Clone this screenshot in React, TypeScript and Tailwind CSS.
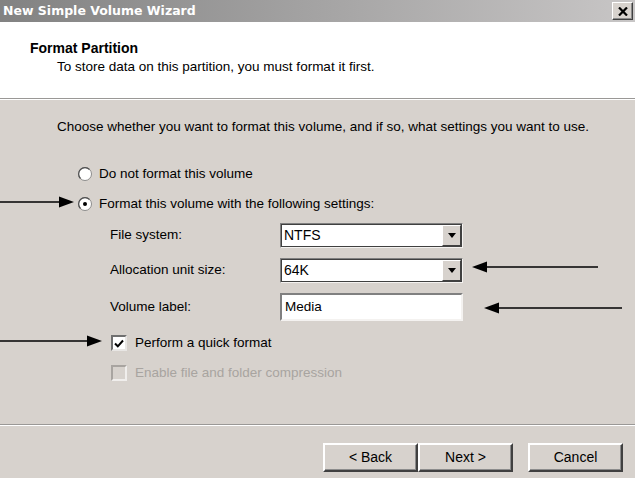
import React from 'react';

const font = { fontFamily: '"Liberation Sans", Arial, sans-serif' };

function Combo({ value }: { value: string }) {
    return (
        <div className="w-[183px] h-[25px] flex bg-white border-2 border-t-[#808080] border-l-[#808080] border-b-[#f4f2f0] border-r-[#f4f2f0] outline outline-1 outline-[#404040] -outline-offset-2">
            <div className="flex-1 flex items-center pl-[2px] text-[14px] text-black">{value}</div>
            <div className="w-[19px] h-full bg-[#d7d2cd] border border-t-white border-l-white border-b-[#404040] border-r-[#404040] flex items-center justify-center">
                <svg width="8" height="5" viewBox="0 0 8 5"><path d="M0 0H8L4 5Z" fill="#000" /></svg>
            </div>
        </div>
    );
}

function Radio({ checked }: { checked?: boolean }) {
    return (
        <svg width="14" height="14" viewBox="0 0 14 14">
            <circle cx="7" cy="7" r="6.5" fill="#fff" stroke="#8c8c8c" />
            <path d="M2.5 11.5A6 6 0 0 1 11.5 2.5" stroke="#505050" strokeWidth="1.2" fill="none" />
            {checked && <circle cx="7" cy="7" r="2" fill="#000" />}
        </svg>
    );
}

function Check({ checked, disabled }: { checked?: boolean; disabled?: boolean }) {
    return (
        <div className={`w-[16px] h-[16px] border-2 ${disabled ? 'bg-[#d7d2cd] border-t-[#a8a4a0] border-l-[#a8a4a0] border-b-[#f0eeec] border-r-[#f0eeec]' : 'bg-white border-t-[#707070] border-l-[#707070] border-b-[#e8e6e4] border-r-[#e8e6e4]'} flex items-center justify-center`}>
            {checked && (
                <svg width="10" height="9" viewBox="0 0 10 9"><path d="M1 4.5L3.8 7.3L9 1.5" stroke="#000" strokeWidth="2" fill="none" /></svg>
            )}
        </div>
    );
}

function Button({ label }: { label: string }) {
    return (
        <button className="w-[95px] h-[29px] bg-[#d7d2cd] text-[14px] text-black border-2 border-t-white border-l-white border-b-[#404040] border-r-[#404040] shadow-[inset_-1px_-1px_0_#8c8c8c]">
            {label}
        </button>
    );
}

function Arrow({ x1, x2, y }: { x1: number; x2: number; y: number }) {
    const dir = x2 > x1 ? 1 : -1;
    return (
        <svg className="absolute left-0 top-0 pointer-events-none" width="635" height="478">
            <line x1={x1} y1={y} x2={x2 - dir * 10} y2={y} stroke="#000" strokeWidth="1.6" />
            <path d={`M${x2} ${y}L${x2 - dir * 15} ${y - 5.5}L${x2 - dir * 15} ${y + 5.5}Z`} fill="#000" />
        </svg>
    );
}

export default function App() {
    return (
        <div className="relative w-[635px] h-[478px] flex flex-col bg-[#d7d2cd] overflow-hidden" style={font}>
            <div className="h-[22px] flex items-center justify-between bg-gradient-to-r from-[#828282] to-[#c8c6c6] pl-[3px] pr-[2px]">
                <span className="text-white font-bold text-[12.5px]" style={{ fontFamily: '"DejaVu Sans", sans-serif' }}>New Simple Volume Wizard</span>
                <div className="w-[21px] h-[18px] bg-[#d7d2cd] border border-t-white border-l-white border-b-[#404040] border-r-[#404040] shadow-[inset_-1px_-1px_0_#8c8c8c] flex items-center justify-center">
                    <svg width="10" height="9" viewBox="0 0 10 9"><path d="M1 0.5L9 8.5M9 0.5L1 8.5" stroke="#000" strokeWidth="2.2" /></svg>
                </div>
            </div>
            <div className="h-[76px] bg-white flex flex-col pl-[30px] pt-[17px]">
                <div className="font-bold text-[14px] text-black leading-[18px]">Format Partition</div>
                <div className="pl-[27px] text-[13.5px] text-black leading-[18px] mt-[1px]">To store data on this partition, you must format it first.</div>
            </div>
            <div className="h-[1px] bg-[#9a9896]" />
            <div className="h-[1px] bg-white" />
            <div className="h-[324px] flex flex-col text-[13.5px] text-black">
                <div className="pl-[57px] pt-[19px] leading-[16px]">Choose whether you want to format this volume, and if so, what settings you want to use.</div>
                <div className="pl-[78px] mt-[31px] flex items-center gap-[7px] h-[16px]">
                    <Radio />
                    <span>Do not format this volume</span>
                </div>
                <div className="pl-[78px] mt-[14px] flex items-center gap-[7px] h-[16px]">
                    <Radio checked />
                    <span>Format this volume with the following settings:</span>
                </div>
                <div className="pl-[110px] mt-[11px] grid grid-cols-[170px_auto] gap-y-[10px] items-center">
                    <span>File system:</span>
                    <Combo value="NTFS" />
                    <span>Allocation unit size:</span>
                    <Combo value="64K" />
                    <span>Volume label:</span>
                    <div className="w-[183px] h-[28px] bg-white border-2 border-t-[#808080] border-l-[#808080] border-b-[#f4f2f0] border-r-[#f4f2f0] flex items-center pl-[3px]">Media</div>
                </div>
                <div className="pl-[111px] mt-[14px] flex items-center gap-[8px] h-[16px]">
                    <Check checked />
                    <span>Perform a quick format</span>
                </div>
                <div className="pl-[111px] mt-[14px] flex items-center gap-[8px] h-[16px] text-[#a8a4a0]">
                    <Check disabled />
                    <span>Enable file and folder compression</span>
                </div>
            </div>
            <div className="h-[1px] bg-[#9a9896]" />
            <div className="h-[1px] bg-white" />
            <div className="flex-1 flex justify-end items-start pt-[17px] pr-[12px]">
                <Button label="< Back" />
                <Button label="Next >" />
                <div className="w-[15px]" />
                <Button label="Cancel" />
            </div>
            <Arrow x1={0} x2={74} y={202} />
            <Arrow x1={598} x2={472} y={267} />
            <Arrow x1={622} x2={484} y={308} />
            <Arrow x1={0} x2={102} y={341} />
        </div>
    );
}
